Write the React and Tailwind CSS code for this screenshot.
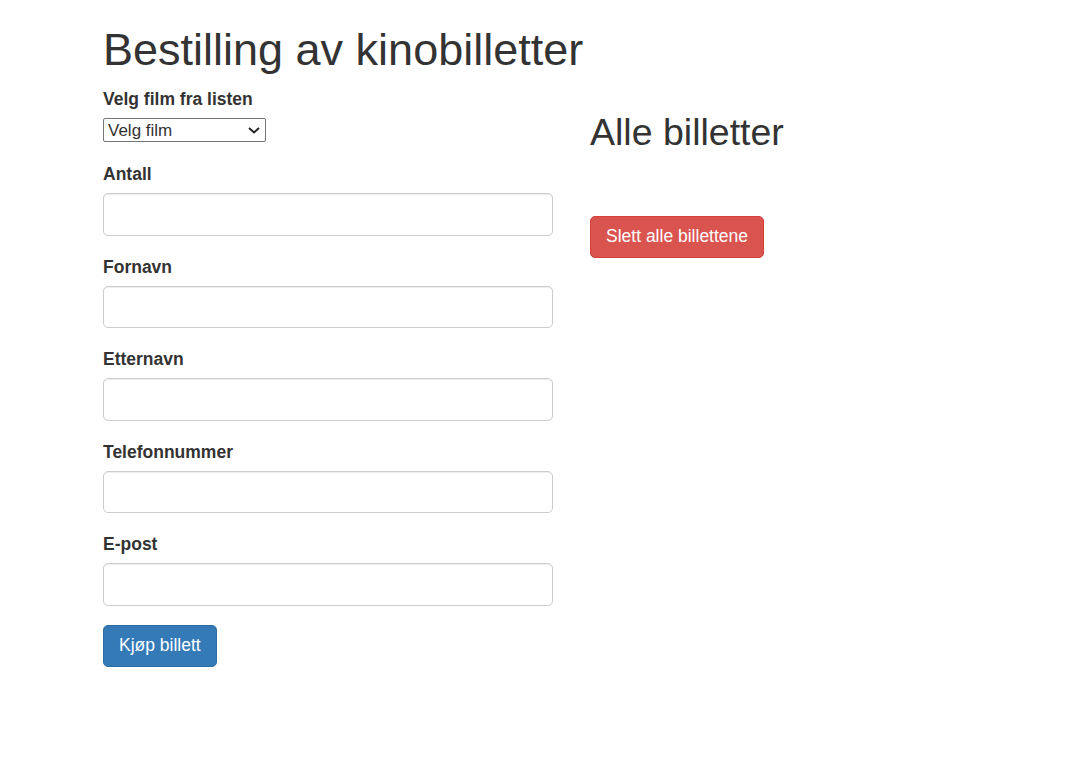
export default function App() {
  const fields = ["Antall", "Fornavn", "Etternavn", "Telefonnummer", "E-post"];

  return (
    <div className="min-h-screen bg-white text-[#333] font-['Liberation_Sans',Arial,sans-serif] text-[17.5px] leading-[25px]">
      <div className="pl-[103px]">
        <h1 className="mt-[25px] mb-[12.5px] text-[45px] leading-[49.5px] font-normal">
          Bestilling av kinobilletter
        </h1>

        <div className="flex items-start gap-[37px]">
          {/* Bestillingsskjema */}
          <form className="w-[450px]">
            <div className="mb-[18.75px]">
              <label className="inline-block mb-[6.25px] font-bold">Velg film fra listen</label>
              <div className="relative w-[163px] h-[25px]">
                <select className="appearance-none block w-[163px] h-[24px] border border-[#767676] rounded-[2px] pl-[4px] text-[17px] leading-[21px] text-[#333] bg-white">
                  <option>Velg film</option>
                </select>
                <svg
                  className="absolute right-[6px] top-[9px] pointer-events-none"
                  width="12"
                  height="7"
                  viewBox="0 0 12 7"
                  fill="none"
                >
                  <path d="M1 1l5 4.5L11 1" stroke="#222" strokeWidth="2" />
                </svg>
              </div>
            </div>

            {fields.map((f) => (
              <div key={f} className="mb-[18.75px]">
                <label className="inline-block mb-[6.25px] font-bold">{f}</label>
                <input
                  type="text"
                  className="block w-full h-[42.5px] px-[15px] border border-[#ccc] rounded-[5px] bg-white shadow-[inset_0_1px_1px_rgba(0,0,0,0.075)]"
                />
              </div>
            ))}

            <button
              type="button"
              className="px-[15px] py-[7.5px] leading-[25px] text-white bg-[#337ab7] border border-[#2e6da4] rounded-[5px]"
            >
              Kjøp billett
            </button>
          </form>

          {/* Billettliste */}
          <div>
            <h2 className="mt-[25px] mb-[12.5px] text-[37.5px] leading-[41.25px] font-normal">Alle billetter</h2>
            <div className="h-[50px]"></div>
            <button
              type="button"
              className="px-[15px] py-[7.5px] leading-[25px] text-white bg-[#d9534f] border border-[#d43f3a] rounded-[5px]"
            >
              Slett alle billettene
            </button>
          </div>
        </div>
      </div>
    </div>
  );
}
